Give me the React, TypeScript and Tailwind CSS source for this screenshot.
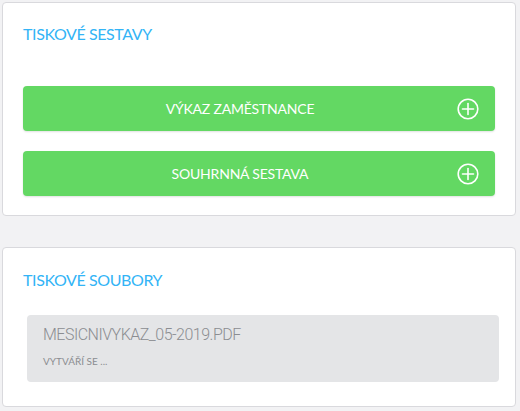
import React from "react";

function PlusCircle() {
  return (
    <svg width="22" height="22" viewBox="0 0 22 22" fill="none" stroke="white" strokeWidth="1.6" strokeLinecap="round">
      <circle cx="11" cy="11" r="9.8" />
      <line x1="11" y1="5.5" x2="11" y2="16.5" />
      <line x1="5.5" y1="11" x2="16.5" y2="11" />
    </svg>
  );
}

function GreenButton({ label }: { label: string }) {
  return (
    <div className="flex h-[45px] items-center rounded-[4px] bg-[#63d863] shadow-[0_1px_2px_rgba(0,0,0,0.12)]">
      <span className="flex-1 text-center text-[14px] leading-[20px] text-white tracking-[-0.2px]">{label}</span>
      <span className="flex w-[38px] justify-end pr-[16px]">
        <PlusCircle />
      </span>
    </div>
  );
}

export default function App() {
  return (
    <div
      className="min-h-[411px] w-[520px] bg-[#f2f2f4] pl-[2px] pr-[4px] pt-[2px]"
      style={{ fontFamily: "Lato, 'Open Sans', sans-serif" }}
    >
      <div className="rounded-[4px] border border-[#d9d9dd] bg-white px-[20px] pt-[21px] pb-[19px]">
        <div className="text-[16px] leading-[20px] tracking-[-0.4px] text-[#33b4f6]">TISKOVÉ SESTAVY</div>
        <div className="mt-[42px] flex flex-col gap-[20px]">
          <GreenButton label="VÝKAZ ZAMĚSTNANCE" />
          <GreenButton label="SOUHRNNÁ SESTAVA" />
        </div>
      </div>
      <div className="mt-[31px] rounded-[4px] border border-[#d9d9dd] bg-white pl-[24px] pr-[16px] pt-[22px] pb-[24px]">
        <div className="-ml-[4px] text-[16px] leading-[20px] tracking-[-0.4px] text-[#33b4f6]">TISKOVÉ SOUBORY</div>
        <div className="mt-[25px] h-[67px] rounded-[4px] bg-[#e4e5e7] pl-[16px] pt-[10px]">
          <div className="text-[16px] font-light leading-[20px] tracking-[-0.5px] text-[#8b8d91]" style={{ fontFamily: "Roboto, sans-serif" }}>
            MESICNIVYKAZ_05-2019.PDF
          </div>
          <div className="mt-[10px] text-[10px] leading-[12px] text-[#8b8d91]">VYTVÁŘÍ SE ...</div>
        </div>
      </div>
    </div>
  );
}
